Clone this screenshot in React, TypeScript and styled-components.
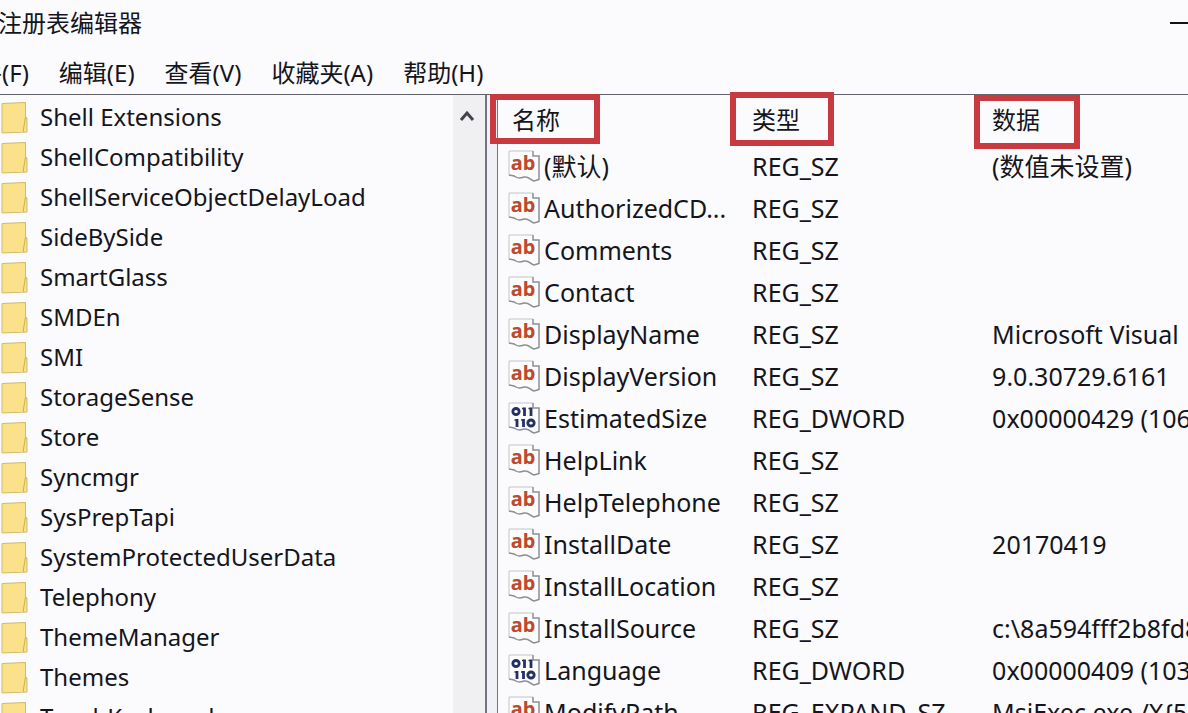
import React from "react";
import styled, { createGlobalStyle } from "styled-components";

const GlobalStyle = createGlobalStyle`
  * { box-sizing: border-box; }
  body {
    margin: 0;
    background: #fbfbfe;
    color: #15151c;
    font-family: "Noto Sans", "Noto Sans CJK SC", sans-serif;
    font-size: 24px;
    line-height: 32px;
  }
  button { font: inherit; color: inherit; background: none; border: 0; padding: 0; cursor: default; }
`;

const Window = styled.div`
  display: flex;
  flex-direction: column;
  height: 100vh;
  overflow: hidden;
`;

const TitleBar = styled.header`
  display: flex;
  align-items: center;
  justify-content: space-between;
  height: 46px;
  flex: none;
`;

const Title = styled.h1`
  margin: 0 0 0 -2px;
  font-size: 24px;
  font-weight: 400;
  white-space: nowrap;
`;

const Minimize = styled.button`
  display: flex;
  width: 20px;
  height: 32px;
  align-items: center;
`;

const MenuBar = styled.nav`
  display: flex;
  gap: 30px;
  height: 48px;
  flex: none;
  align-items: center;
  margin-left: -46px;
  padding-top: 6px;
`;

const MenuItem = styled.button`
  white-space: nowrap;
`;

const Panes = styled.main`
  display: flex;
  flex: 1;
  min-height: 0;
  border-top: 1px solid #62626a;
`;

const TreePane = styled.section`
  display: flex;
  flex: 0 0 41%;
  min-width: 0;
  overflow: hidden;
  border-right: 2px solid #74747e;
`;

const Tree = styled.ul`
  flex: 1;
  min-width: 0;
  margin: 0;
  padding: 2px 0 0;
  list-style: none;
`;

const TreeItem = styled.button`
  display: flex;
  align-items: center;
  gap: 12px;
  height: 40px;
  width: 100%;
  white-space: nowrap;
`;

const ScrollTrack = styled.div`
  flex: none;
  width: 32px;
  background: #f0f0f3;
`;

const ScrollUp = styled.button`
  display: flex;
  width: 100%;
  height: 42px;
  align-items: center;
  justify-content: center;
  padding-right: 4px;
`;

const Splitter = styled.div`
  flex: none;
  width: 11px;
  background: #f0f1f6;
  border-right: 1px solid #74747e;
`;

const ValuePane = styled.section`
  flex: 1;
  min-width: 0;
`;

const ValueTable = styled.table`
  width: 100%;
  table-layout: fixed;
  border-collapse: collapse;
`;

const Column = styled.col<{ $width?: string }>`
  width: ${(p) => p.$width ?? "auto"};
`;

const HeadCell = styled.th`
  position: relative;
  height: 50px;
  padding: 0 0 0 14px;
  font-size: 24px;
  font-weight: 400;
  text-align: left;
`;

const Cell = styled.td`
  height: 42px;
  padding: 0 0 0 14px;
  font-size: 25px;
  white-space: nowrap;
  overflow: hidden;
`;

const NameCell = styled(Cell)`
  padding-left: 10px;
`;

const NameContent = styled.div`
  display: flex;
  align-items: center;
  gap: 4px;
`;

const Highlight = styled.span<{ $top: number; $left: number; $width: number; $height: number }>`
  position: absolute;
  top: ${(p) => p.$top}px;
  left: ${(p) => p.$left}px;
  width: ${(p) => p.$width}px;
  height: ${(p) => p.$height}px;
  border: 6px solid #c93a40;
  pointer-events: none;
`;

const Icon = styled.svg`
  display: block;
  flex: none;
`;

const FolderIcon = () => (
  <Icon width="28" height="34" viewBox="0 0 28 34" aria-hidden="true">
    <path d="M2 3.5 25.5 2.5V17L27 18V32L2 33Z" fill="#f9e08a" stroke="#d0ba70" />
    <path d="M3 4.5 24.5 3.5V18L22.5 32H3Z" fill="#fbe18a" />
    <path d="M25.5 17 23 32" stroke="#cfae4c" fill="none" />
  </Icon>
);

const Page = () => (
  <>
    <path d="M1 1H25V5.500H31V30L26 31C22 30 21 26 16 27C13 28 11 29 8 27C5 25 4 26 1 25Z" fill="#fcfcfd" />
    <path d="M1 25V1H25" fill="none" stroke="#c3c4c8" />
    <path d="M25 1V6H31V30" fill="none" stroke="#8b8f94" strokeWidth="1.500" />
    <path d="M1 25C4 26 5 25 8 27C11 29 13 28 16 27C21 26 22 30 26 31L31 29.500" fill="none" stroke="#8b8f94" strokeWidth="1.500" />
  </>
);

const StringIcon = () => (
  <Icon width="32" height="32" viewBox="0 0 32 32" aria-hidden="true">
    <Page />
    <text x="15" y="20" textAnchor="middle" fontFamily="Noto Sans" fontWeight="700" fontSize="20" fill="#bd4930">ab</text>
  </Icon>
);

const BinaryIcon = () => (
  <Icon width="32" height="32" viewBox="0 0 32 32" aria-hidden="true">
    <Page />
    <g fill="none" stroke="#263064" strokeWidth="2.800">
      <ellipse cx="8" cy="9.500" rx="3.200" ry="3" />
      <path d="M16.500 5.500V14M23 5.500V14M9 17V25M15.500 17V25" />
      <path d="M14 6.500H16M20.500 6.500H22.500M6.500 18H9M13 18H15" strokeWidth="1.500" />
      <ellipse cx="23" cy="21" rx="3.200" ry="3" />
    </g>
  </Icon>
);

const menus = ["文件(F)", "编辑(E)", "查看(V)", "收藏夹(A)", "帮助(H)"];

const folders = [
  "Shell Extensions", "ShellCompatibility", "ShellServiceObjectDelayLoad", "SideBySide",
  "SmartGlass", "SMDEn", "SMI", "StorageSense", "Store", "Syncmgr", "SysPrepTapi",
  "SystemProtectedUserData", "Telephony", "ThemeManager", "Themes", "TouchKeyboard",
];

const columns = [
  { label: "名称", box: { $top: -1, $left: -8, $width: 110, $height: 50 } },
  { label: "类型", box: { $top: -3, $left: -8, $width: 104, $height: 54 } },
  { label: "数据", box: { $top: 0, $left: -4, $width: 106, $height: 54 } },
];

const values: { name: string; type: string; data: string }[] = [
  { name: "(默认)", type: "REG_SZ", data: "(数值未设置)" },
  { name: "AuthorizedCD...", type: "REG_SZ", data: "" },
  { name: "Comments", type: "REG_SZ", data: "" },
  { name: "Contact", type: "REG_SZ", data: "" },
  { name: "DisplayName", type: "REG_SZ", data: "Microsoft Visual" },
  { name: "DisplayVersion", type: "REG_SZ", data: "9.0.30729.6161" },
  { name: "EstimatedSize", type: "REG_DWORD", data: "0x00000429 (1065)" },
  { name: "HelpLink", type: "REG_SZ", data: "" },
  { name: "HelpTelephone", type: "REG_SZ", data: "" },
  { name: "InstallDate", type: "REG_SZ", data: "20170419" },
  { name: "InstallLocation", type: "REG_SZ", data: "" },
  { name: "InstallSource", type: "REG_SZ", data: "c:\\8a594fff2b8fd8" },
  { name: "Language", type: "REG_DWORD", data: "0x00000409 (1033)" },
  { name: "ModifyPath", type: "REG_EXPAND_SZ", data: "MsiExec.exe /X{5" },
];

export default function App() {
  return (
    <Window>
      <GlobalStyle />
      <TitleBar>
        <Title>注册表编辑器</Title>
        <Minimize aria-label="最小化">
          <Icon width="20" height="4" viewBox="0 0 20 4" aria-hidden="true">
            <path d="M2 2H20" stroke="#111118" strokeWidth="2" />
          </Icon>
        </Minimize>
      </TitleBar>
      <MenuBar>
        {menus.map((m) => <MenuItem key={m}>{m}</MenuItem>)}
      </MenuBar>
      <Panes>
        <TreePane>
          <Tree>
            {folders.map((f) => (
              <li key={f}><TreeItem><FolderIcon />{f}</TreeItem></li>
            ))}
          </Tree>
          <ScrollTrack>
            <ScrollUp aria-label="向上滚动">
              <Icon width="16" height="14" viewBox="0 0 16 14" aria-hidden="true">
                <path d="M2 11 8 4 14 11" fill="none" stroke="#44444c" strokeWidth="3" />
              </Icon>
            </ScrollUp>
          </ScrollTrack>
        </TreePane>
        <Splitter />
        <ValuePane>
          <ValueTable>
            <colgroup>
              <Column $width="240px" />
              <Column $width="240px" />
              <Column />
            </colgroup>
            <thead>
              <tr>
                {columns.map((c) => (
                  <HeadCell key={c.label} scope="col">{c.label}<Highlight {...c.box} /></HeadCell>
                ))}
              </tr>
            </thead>
            <tbody>
              {values.map((v) => (
                <tr key={v.name}>
                  <NameCell>
                    <NameContent>
                      {v.type === "REG_DWORD" ? <BinaryIcon /> : <StringIcon />}
                      {v.name}
                    </NameContent>
                  </NameCell>
                  <Cell>{v.type}</Cell>
                  <Cell>{v.data}</Cell>
                </tr>
              ))}
            </tbody>
          </ValueTable>
        </ValuePane>
      </Panes>
    </Window>
  );
}
